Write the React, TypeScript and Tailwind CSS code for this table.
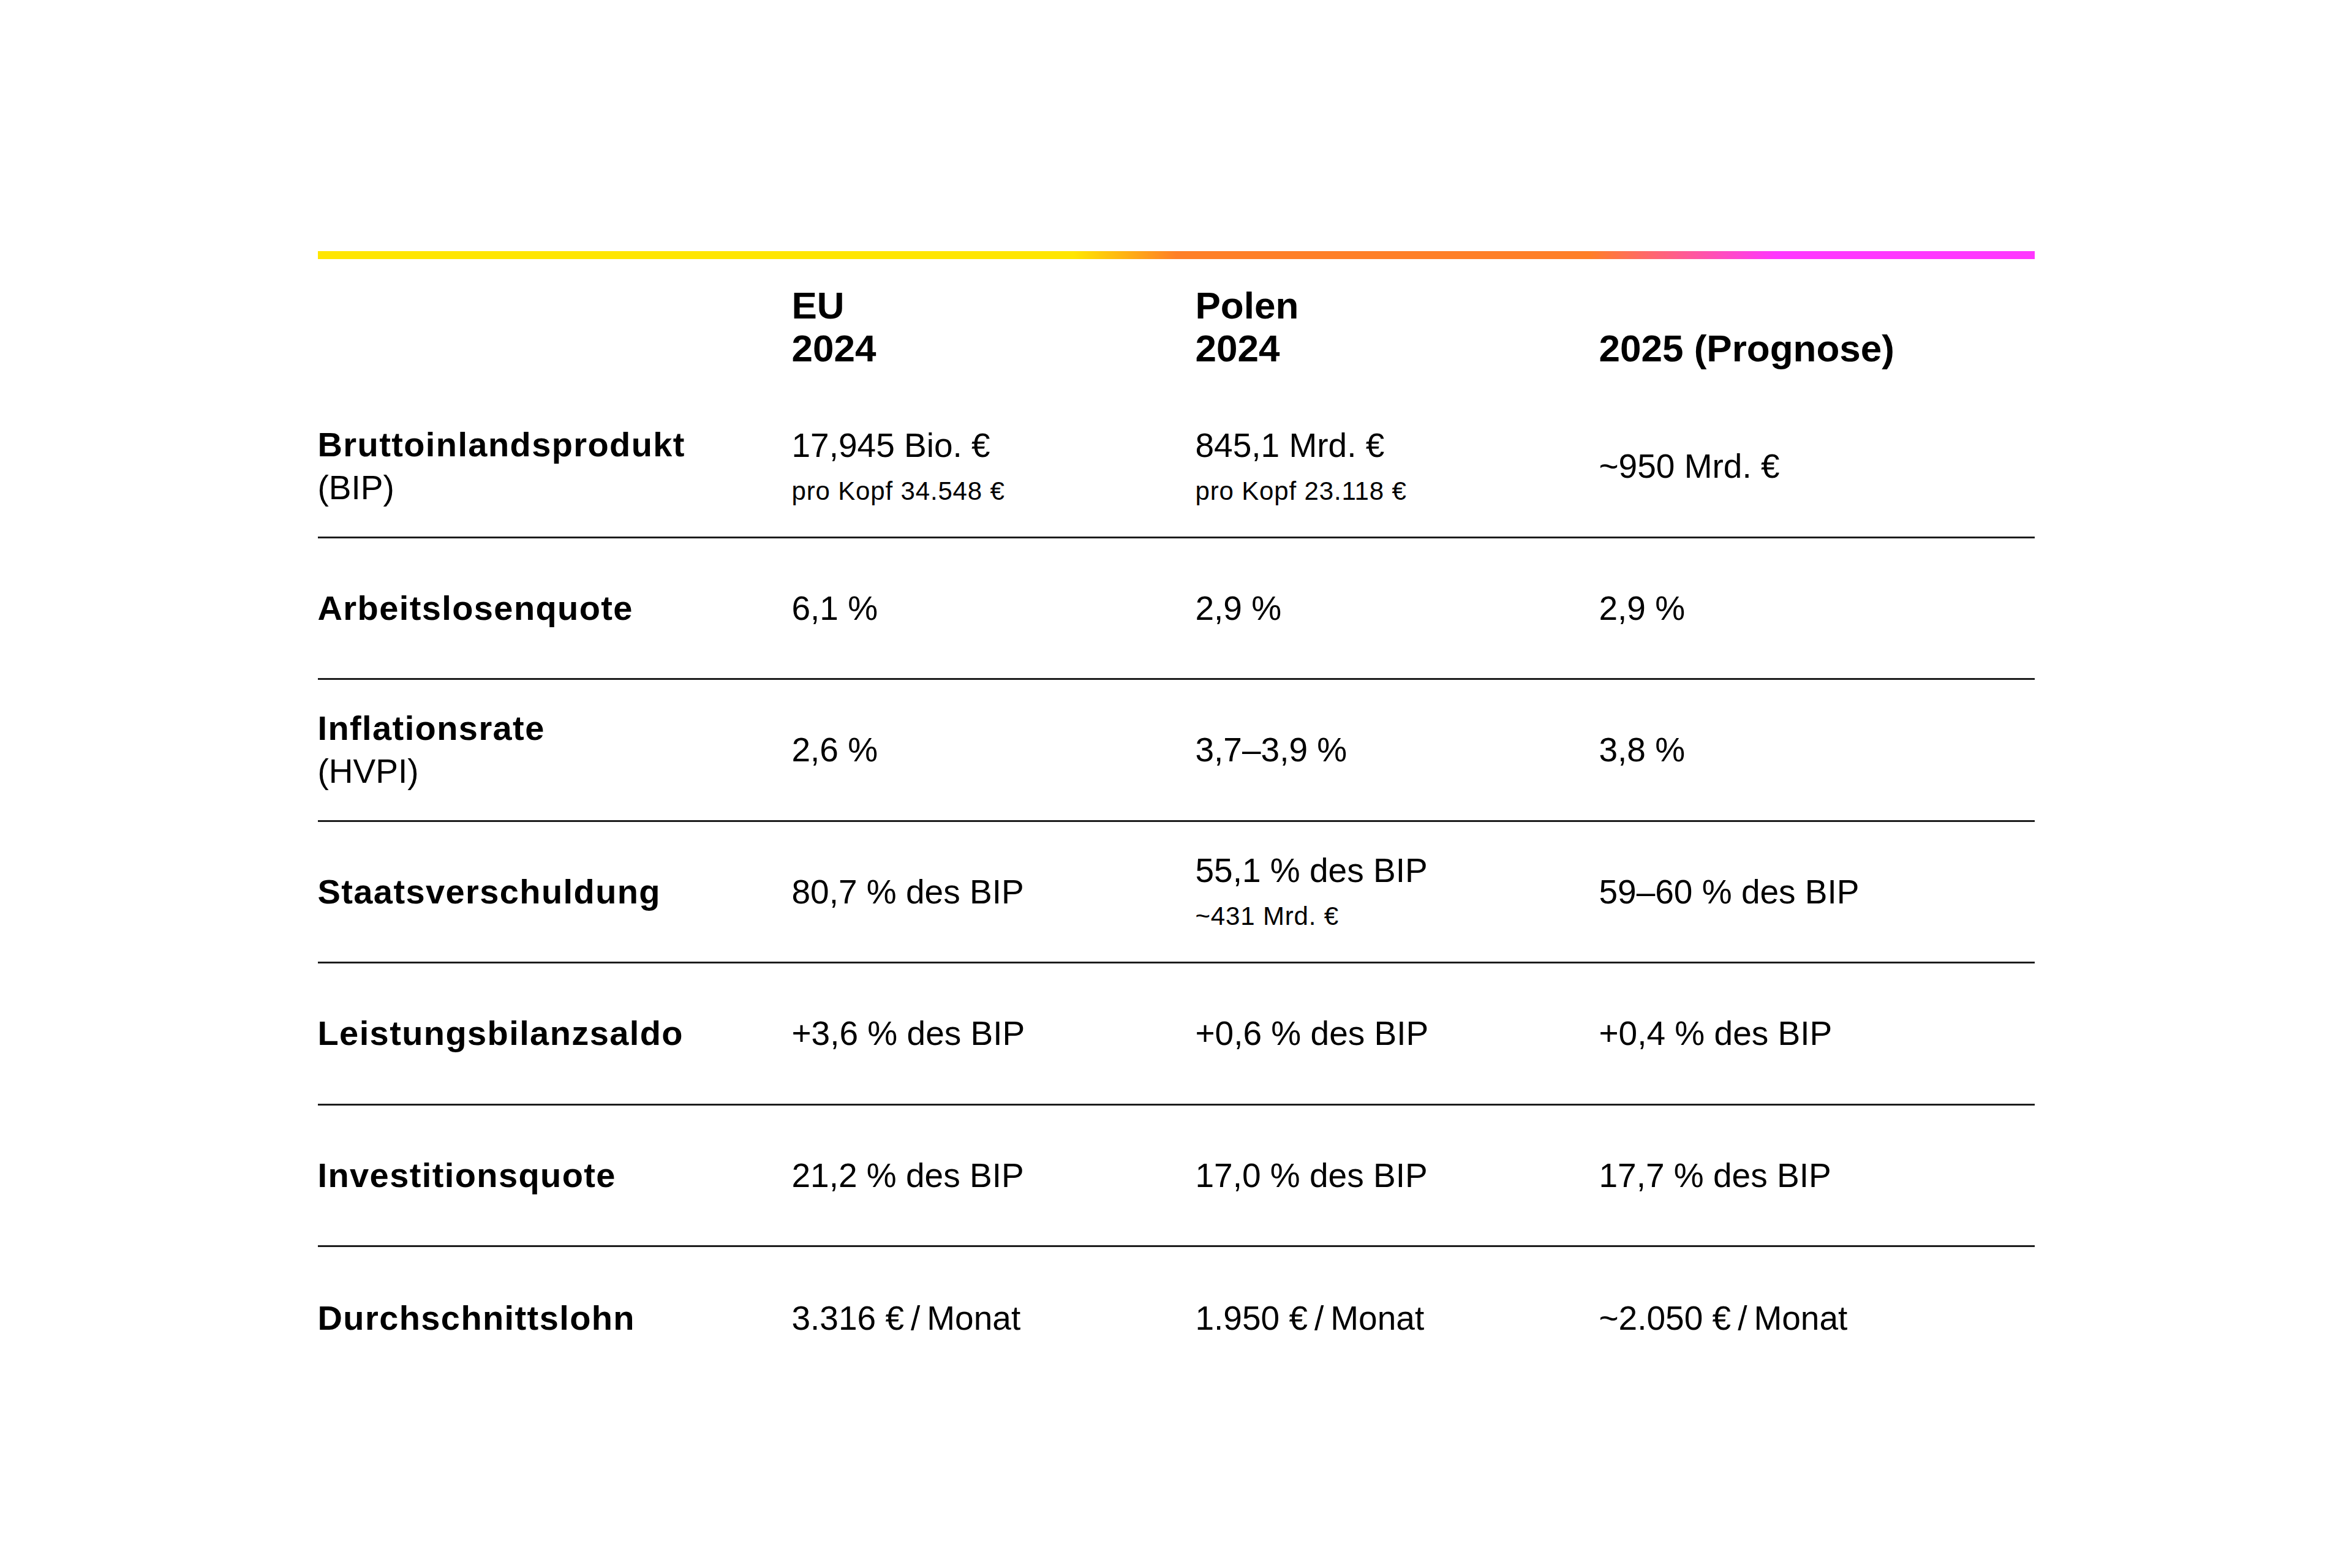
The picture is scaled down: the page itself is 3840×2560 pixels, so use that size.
import React from 'react';

type Cell = { main: string; sub?: string };
type Row = { label: string; note?: string; cells: Cell[] };

const rows: Row[] = [
  {
    label: 'Bruttoinlandsprodukt',
    note: '(BIP)',
    cells: [
      { main: '17,945 Bio. €', sub: 'pro Kopf 34.548 €' },
      { main: '845,1 Mrd. €', sub: 'pro Kopf 23.118 €' },
      { main: '~950 Mrd. €' },
    ],
  },
  { label: 'Arbeitslosenquote', cells: [{ main: '6,1 %' }, { main: '2,9 %' }, { main: '2,9 %' }] },
  {
    label: 'Inflationsrate',
    note: '(HVPI)',
    cells: [{ main: '2,6 %' }, { main: '3,7–3,9 %' }, { main: '3,8 %' }],
  },
  {
    label: 'Staatsverschuldung',
    cells: [
      { main: '80,7 % des BIP' },
      { main: '55,1 % des BIP', sub: '~431 Mrd. €' },
      { main: '59–60 % des BIP' },
    ],
  },
  {
    label: 'Leistungsbilanzsaldo',
    cells: [{ main: '+3,6 % des BIP' }, { main: '+0,6 % des BIP' }, { main: '+0,4 % des BIP' }],
  },
  {
    label: 'Investitionsquote',
    cells: [{ main: '21,2 % des BIP' }, { main: '17,0 % des BIP' }, { main: '17,7 % des BIP' }],
  },
  {
    label: 'Durchschnittslohn',
    cells: [
      { main: '3.316 €\u2009/\u2009Monat' },
      { main: '1.950 €\u2009/\u2009Monat' },
      { main: '~2.050 €\u2009/\u2009Monat' },
    ],
  },
];

const grid = 'grid grid-cols-[774px_659px_659px_1fr]';

export default function App() {
  return (
    <div className="min-h-[2560px] w-full bg-white pt-[410px] text-black font-['Liberation_Sans',Arial,sans-serif]">
      <div className="mx-auto w-[2803px]">
        {/* gradient rule */}
        <div className="h-[13px] w-full bg-[linear-gradient(to_right,#FFE600_0%,#FFE600_44%,#FF7F27_50%,#FF7F27_74%,#FF36FF_85%,#FF36FF_100%)]" />

        {/* header */}
        <div className={`${grid} h-[224px] items-end pb-[43px] text-[62px] font-bold leading-[70px]`}>
          <div />
          <div>
            EU
            <br />
            2024
          </div>
          <div>
            Polen
            <br />
            2024
          </div>
          <div>2025 (Prognose)</div>
        </div>

        {/* body */}
        {rows.map((row, i) => (
          <div
            key={row.label}
            className={`${grid} h-[231.5px] items-center ${i < rows.length - 1 ? 'border-b-[3px] border-[#1c1c1c]' : ''}`}
          >
            <div className="leading-[70px]">
              <div className="text-[56px] font-bold tracking-[0.025em]">{row.label}</div>
              {row.note && <div className="text-[55px]">{row.note}</div>}
            </div>
            {row.cells.map((c, j) => (
              <div key={j}>
                <div className="text-[55px] leading-[70px]">{c.main}</div>
                {c.sub && <div className="mt-[10px] text-[42px] leading-[59px] tracking-[0.02em]">{c.sub}</div>}
              </div>
            ))}
          </div>
        ))}
      </div>
    </div>
  );
}
